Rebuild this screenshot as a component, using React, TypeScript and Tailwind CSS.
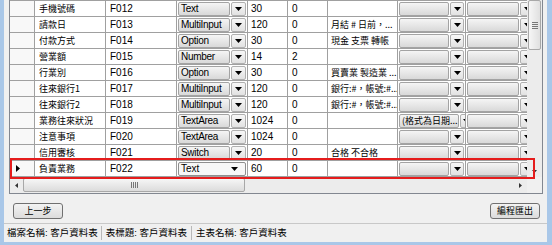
import React from "react";

type Row = {
  name: string;
  code: string;
  type: string;
  len: string;
  dec: string;
  def: string;
  c1: string;
};

const rows: Row[] = [
  { name: "手機號碼", code: "F012", type: "Text", len: "30", dec: "0", def: "", c1: "" },
  { name: "請款日", code: "F013", type: "MultiInput", len: "120", dec: "0", def: "月結 # 日前，...", c1: "" },
  { name: "付款方式", code: "F014", type: "Option", len: "30", dec: "0", def: "現金 支票 轉帳", c1: "" },
  { name: "營業額", code: "F015", type: "Number", len: "14", dec: "2", def: "", c1: "" },
  { name: "行業別", code: "F016", type: "Option", len: "30", dec: "0", def: "買賣業 製造業 ...", c1: "" },
  { name: "往來銀行1", code: "F017", type: "MultiInput", len: "120", dec: "0", def: "銀行:#，帳號:#...", c1: "" },
  { name: "往來銀行2", code: "F018", type: "MultiInput", len: "120", dec: "0", def: "銀行:#，帳號:#...", c1: "" },
  { name: "業務往來狀況", code: "F019", type: "TextArea", len: "1024", dec: "0", def: "", c1: "(格式為日期..." },
  { name: "注意事項", code: "F020", type: "TextArea", len: "1024", dec: "0", def: "", c1: "" },
  { name: "信用審核", code: "F021", type: "Switch", len: "20", dec: "0", def: "合格 不合格", c1: "" },
  { name: "負責業務", code: "F022", type: "Text", len: "60", dec: "0", def: "", c1: "" },
];

const latin = "font-['Liberation_Sans','Noto_Sans_CJK_TC',sans-serif]";

function DownArrow() {
  return (
    <svg width="7" height="4" viewBox="0 0 7 4" className="block">
      <polygon points="0,0 7,0 3.5,4" fill="#000" />
    </svg>
  );
}

function Combo({ text }: { text: string }) {
  return (
    <div className="flex h-[14px] flex-1 gap-[1px]">
      <div className="flex min-w-0 flex-1 items-center truncate rounded-[2px] border border-[#a3a3a3] bg-linear-to-b from-[#f5f5f5] to-[#d9d9d9] pl-[2px] text-[9px] font-['Noto_Sans_CJK_TC',sans-serif]">
        {text}
      </div>
      <div className="flex w-[14px] shrink-0 items-center justify-center rounded-[2px] border border-[#b0b0b0] bg-linear-to-b from-[#f7f7f7] to-[#e2e2e2]">
        <DownArrow />
      </div>
    </div>
  );
}

function TypeCombo({ text, flat }: { text: string; flat?: boolean }) {
  if (flat) {
    return (
      <div className="flex h-[14px] flex-1 items-center rounded-[2px] border border-[#8f8f8f] bg-[#f7f7f7] pl-[2px] pr-[7px]">
        <span className="flex-1">{text}</span>
        <DownArrow />
      </div>
    );
  }
  return (
    <div className="flex h-[14px] flex-1 gap-[1px]">
      <div className="flex min-w-0 flex-1 items-center overflow-hidden rounded-[2px] border border-[#a3a3a3] bg-linear-to-b from-[#f5f5f5] to-[#d9d9d9] pl-[2px] tracking-[-0.3px]">
        {text}
      </div>
      <div className="flex w-[15px] shrink-0 items-center justify-center rounded-[2px] border border-[#b0b0b0] bg-linear-to-b from-[#f7f7f7] to-[#e2e2e2]">
        <DownArrow />
      </div>
    </div>
  );
}

function GridRow({ row, selected }: { row: Row; selected: boolean }) {
  const cell = "flex shrink-0 items-center overflow-hidden whitespace-nowrap border-r border-[#a0a0a0]";
  return (
    <div className={`flex h-[16px] border-b border-[#a0a0a0] text-[10px] text-black ${latin}`}>
      <div className={`${cell} w-[25px] bg-[#f8f8f8] pl-[6px]`}>
        {selected ? (
          <svg width="4" height="7" viewBox="0 0 4 7" className="block">
            <polygon points="0,0 4,3.5 0,7" fill="#000" />
          </svg>
        ) : null}
      </div>
      <div className={`${cell} w-[71px] bg-white pl-[4px] text-[9px] font-['Noto_Sans_CJK_TC',sans-serif]`}>
        {row.name}
      </div>
      <div className={`${cell} w-[71px] bg-white pl-[4px]`}>{row.code}</div>
      <div className={`${cell} w-[71px] bg-white px-[1px]`}>
        <TypeCombo text={row.type} flat={selected} />
      </div>
      <div className={`${cell} w-[40px] bg-white pl-[3px]`}>{row.len}</div>
      <div className={`${cell} w-[40px] bg-white pl-[4px]`}>{row.dec}</div>
      <div className={`${cell} w-[70px] bg-white pl-[3px] text-[9px] font-['Noto_Sans_CJK_TC',sans-serif]`}>
        {row.def}
      </div>
      <div className={`${cell} w-[68px] bg-white px-[1px]`}>
        <Combo text={row.c1} />
      </div>
      <div className={`${cell} w-[70px] bg-white px-[1px]`}>
        <Combo text="" />
      </div>
    </div>
  );
}

export default function App() {
  return (
    <div className="relative h-[245px] w-[552px] overflow-hidden bg-[#a9c7e8] pb-[3px] pl-[4px] pr-[5px]">
      <div className="flex h-full flex-col bg-[#f0f0f0]">
        {/* grid */}
        <div className="ml-[5px] mr-[4px] flex flex-col border-x border-b border-[#828790] bg-white">
          <div className="flex h-[177px]">
            <div className="min-w-0 flex-1 overflow-hidden border-t border-[#a0a0a0]">
              <div className="w-[560px]">
                {rows.map((row, i) => (
                  <GridRow key={row.code} row={row} selected={i === rows.length - 1} />
                ))}
              </div>
            </div>
            <div className="flex w-[15px] shrink-0 flex-col bg-[#ececec]">
              <div className="mx-[1px] flex h-[50px] items-center justify-center rounded-[2px] border border-[#a8a8a8] bg-linear-to-r from-[#f6f6f6] to-[#e0e0e0]">
                <div className="flex flex-col gap-[1px]">
                  <div className="h-[1px] w-[6px] bg-[#777]" />
                  <div className="h-[1px] w-[6px] bg-[#777]" />
                  <div className="h-[1px] w-[6px] bg-[#777]" />
                  <div className="h-[1px] w-[6px] bg-[#777]" />
                </div>
              </div>
              <div className="flex-1" />
              <div className="flex h-[12px] items-center justify-center">
                <svg width="5" height="3" viewBox="0 0 5 3" className="block">
                  <polygon points="0,0 5,0 2.5,3" fill="#333" />
                </svg>
              </div>
            </div>
          </div>
          <div className="flex h-[16px]">
            <div className="flex min-w-0 flex-1 items-center bg-[#ececec]">
              <div className="flex w-[13px] shrink-0 justify-center">
                <svg width="3" height="5" viewBox="0 0 3 5" className="block">
                  <polygon points="3,0 3,5 0,2.5" fill="#333" />
                </svg>
              </div>
              <div className="flex h-[14px] w-[222px] shrink-0 items-center justify-center rounded-[2px] border border-[#a8a8a8] bg-linear-to-b from-[#f6f6f6] to-[#dcdcdc]">
                <div className="flex gap-[1px]">
                  <div className="h-[6px] w-[1px] bg-[#777]" />
                  <div className="h-[6px] w-[1px] bg-[#777]" />
                  <div className="h-[6px] w-[1px] bg-[#777]" />
                  <div className="h-[6px] w-[1px] bg-[#777]" />
                </div>
              </div>
              <div className="flex-1" />
              <div className="flex w-[14px] shrink-0 justify-center">
                <svg width="3" height="5" viewBox="0 0 3 5" className="block">
                  <polygon points="0,0 3,2.5 0,5" fill="#333" />
                </svg>
              </div>
            </div>
            <div className="w-[15px] shrink-0 bg-[#f0f0f0]" />
          </div>
        </div>

        {/* buttons */}
        <div className="mt-[9px] flex h-[16px] justify-between pl-[9px] pr-[7px] text-[9px] font-['Noto_Sans_CJK_TC',sans-serif] text-black">
          <button className="flex w-[50px] items-center justify-center rounded-[3px] border border-[#707070] bg-linear-to-b from-[#f3f3f3] to-[#dcdcdc]">
            上一步
          </button>
          <button className="flex w-[50px] items-center justify-center rounded-[3px] border border-[#707070] bg-linear-to-b from-[#f3f3f3] to-[#dcdcdc]">
            編程匯出
          </button>
        </div>

        {/* status bar */}
        <div className="mt-[4px] flex flex-1 items-center border-t border-[#c8c8c8] pl-[3px] text-[9.5px] font-['Liberation_Sans','Noto_Sans_CJK_TC',sans-serif] text-black">
          <div className="flex h-[14px] items-center border-r border-[#b8b8b8] pr-[3px]">檔案名稱: 客戶資料表</div>
          <div className="flex h-[14px] items-center border-r border-[#b8b8b8] px-[4px]">表標題: 客戶資料表</div>
          <div className="flex h-[14px] items-center px-[4px]">主表名稱: 客戶資料表</div>
        </div>
      </div>

      {/* highlight around selected row */}
      <div className="pointer-events-none absolute left-[10px] top-[158px] h-[21px] w-[525px] border-2 border-[#e51c1c]" />
    </div>
  );
}
